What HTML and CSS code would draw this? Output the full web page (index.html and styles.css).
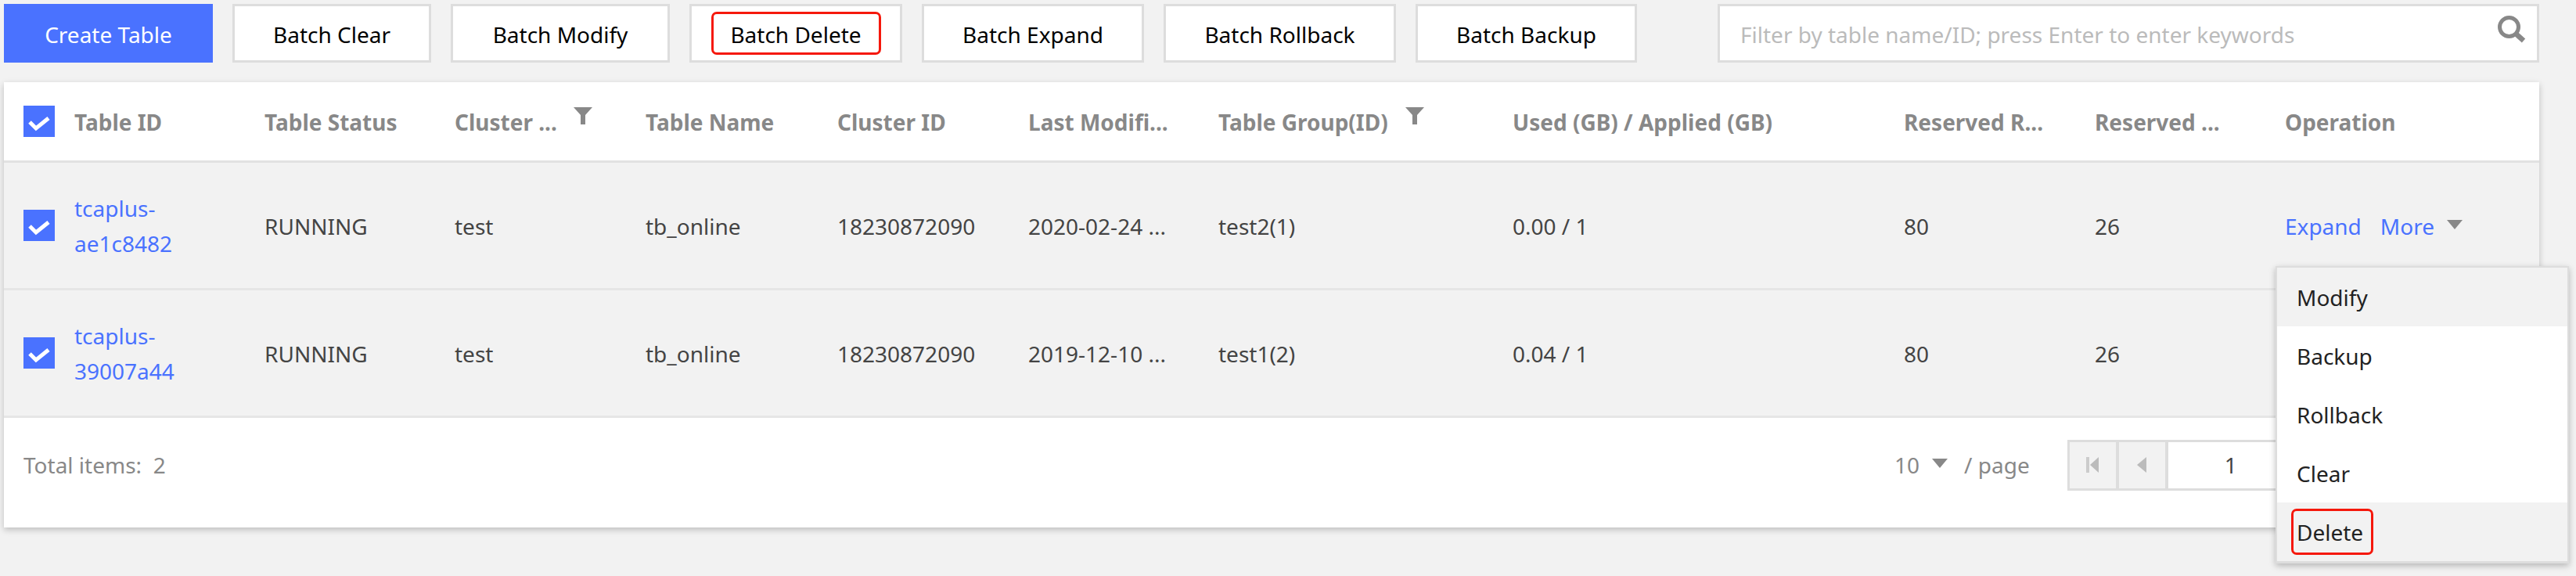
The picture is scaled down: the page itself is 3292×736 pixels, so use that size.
FILE: index.html
```html
<!DOCTYPE html>
<html lang="en">
<head>
<meta charset="utf-8">
<title>Tables</title>
<link rel="stylesheet" href="styles.css">
</head>
<body>
<svg class="defs" width="0" height="0" aria-hidden="true">
  <symbol id="check" viewBox="0 0 40 40"><path d="M8 21l8 8 16-13" fill="none" stroke="#fff" stroke-width="5"/></symbol>
  <symbol id="filter" viewBox="0 0 24 22"><path d="M0 0h24l-9 10v12h-6v-12z" fill="#888"/></symbol>
</svg>
<div class="toolbar">
  <button class="btn primary w-create">Create Table</button>
  <button class="btn w-clear">Batch Clear</button>
  <button class="btn w-modify">Batch Modify</button>
  <button class="btn w-delete"><span class="mark mark-btn">Batch Delete</span></button>
  <button class="btn w-expand">Batch Expand</button>
  <button class="btn w-rollback">Batch Rollback</button>
  <button class="btn w-backup">Batch Backup</button>
  <div class="search">
    <span class="placeholder">Filter by table name/ID; press Enter to enter keywords</span>
    <svg class="search-icon" width="36" height="36" viewBox="0 0 36 36"><circle cx="14.500" cy="14.500" r="12" fill="none" stroke="#888" stroke-width="5"/><path d="M23 23l10 9" stroke="#888" stroke-width="6.500" fill="none"/></svg>
  </div>
</div>
<div class="card">
  <div class="row head">
    <div class="cell id-cell"><span class="box"><svg width="40" height="40"><use href="#check"/></svg></span><span>Table ID</span></div>
    <div class="cell">Table Status</div>
    <div class="cell">Cluster ...<svg class="filter filter-cluster" width="24" height="22"><use href="#filter"/></svg></div>
    <div class="cell">Table Name</div>
    <div class="cell">Cluster ID</div>
    <div class="cell">Last Modifi...</div>
    <div class="cell">Table Group(ID)<svg class="filter filter-group" width="24" height="22"><use href="#filter"/></svg></div>
    <div class="cell">Used (GB) / Applied (GB)</div>
    <div class="cell">Reserved R...</div>
    <div class="cell">Reserved ...</div>
    <div class="cell">Operation</div>
  </div>
  <div class="row body">
    <div class="cell id-cell"><span class="box"><svg width="40" height="40"><use href="#check"/></svg></span><a class="link idlink">tcaplus-<br>ae1c8482</a></div>
    <div class="cell">RUNNING</div>
    <div class="cell">test</div>
    <div class="cell">tb_online</div>
    <div class="cell">18230872090</div>
    <div class="cell">2020-02-24 ...</div>
    <div class="cell">test2(1)</div>
    <div class="cell">0.00 / 1</div>
    <div class="cell">80</div>
    <div class="cell">26</div>
    <div class="cell ops"><a class="link">Expand</a><a class="link more">More</a><i class="caret"></i></div>
  </div>
  <div class="row body">
    <div class="cell id-cell"><span class="box"><svg width="40" height="40"><use href="#check"/></svg></span><a class="link idlink">tcaplus-<br>39007a44</a></div>
    <div class="cell">RUNNING</div>
    <div class="cell">test</div>
    <div class="cell">tb_online</div>
    <div class="cell">18230872090</div>
    <div class="cell">2019-12-10 ...</div>
    <div class="cell">test1(2)</div>
    <div class="cell">0.04 / 1</div>
    <div class="cell">80</div>
    <div class="cell">26</div>
    <div class="cell ops"></div>
  </div>
  <div class="foot">
    <span class="total">Total items:&nbsp; 2</span>
    <div class="pager">
      <span class="size">10</span><i class="caret size-caret"></i><span class="per">/ page</span>
      <div class="pages">
        <span class="pg"><svg width="17" height="20" viewBox="0 0 17 20"><path d="M0 0h4v20h-4z" fill="#ccc"/><path d="M16 0v20l-11-10z" fill="#bbb"/></svg></span>
        <span class="pg"><svg width="13" height="20" viewBox="0 0 13 20"><path d="M12 0v20l-12-10z" fill="#bbb"/></svg></span>
        <span class="pnum">1</span>
      </div>
    </div>
  </div>
</div>
<ul class="menu">
  <li class="on">Modify</li>
  <li>Backup</li>
  <li>Rollback</li>
  <li>Clear</li>
  <li class="on"><span class="mark mark-menu">Delete</span></li>
</ul>
</body>
</html>
```
FILE: styles.css
```css
* { box-sizing: border-box; }
html, body { margin: 0; padding: 0; }
body {
  width: 3292px;
  height: 736px;
  overflow: hidden;
  background: #f2f2f2;
  font-family: "Noto Sans", "Open Sans", sans-serif;
  font-size: 28px;
  color: #444;
  padding: 5px 0 0 5px;
  position: relative;
}
.defs { position: absolute; }
.toolbar { display: flex; gap: 25px; height: 75px; width: 3240px; }
.btn {
  font: inherit;
  color: #000;
  background: #fff;
  border: 3px solid #ddd;
  height: 75px;
  padding: 2px 0 0;
  display: flex;
  align-items: center;
  justify-content: center;
}
.btn.primary { background: #4a72ff; border-color: #4a72ff; color: #fff; }
.w-create { width: 267px; }
.w-clear { width: 254px; }
.w-modify { width: 280px; }
.w-delete { width: 272px; padding-top: 0; }
.w-expand { width: 284px; }
.w-rollback { width: 297px; }
.w-backup { width: 283px; }
.mark { border: 3px solid #f5180c; border-radius: 7px; display: flex; align-items: center; }
.mark-btn { width: 217px; height: 55px; justify-content: center; padding-top: 2px; }
.mark-menu { width: 105px; height: 59px; padding-left: 4px; margin-left: -7px; }
.search {
  margin-left: 78px;
  flex: 1;
  background: #fff;
  border: 3px solid #ddd;
  display: flex;
  align-items: center;
  justify-content: space-between;
  padding: 0 14px 8px 26px;
}
.placeholder { color: #bbb; padding-top: 10px; }
.search-icon { margin-top: -2px; }
.card {
  margin-top: 25px;
  width: 3240px;
  background: #fff;
  box-shadow: 0 3px 8px rgba(0,0,0,.22);
}
.row {
  display: grid;
  grid-template-columns: 308px 243px 244px 245px 244px 243px 376px 500px 244px 243px 350px;
}
.head { height: 103px; border-bottom: 3px solid #e2e2e2; font-weight: 700; color: #888; }
.body { height: 163px; border-bottom: 3px solid #e6e6e6; background: #f2f2f2; }
.cell { padding: 2px 0 0 25px; display: flex; align-items: center; white-space: nowrap; }
.id-cell { gap: 25px; padding-top: 0; }
.id-cell > span:last-child, .idlink { padding-top: 2px; }
.box { width: 40px; height: 40px; background: #4a72ff; display: block; flex: none; }
.box svg { display: block; }
.filter { margin-top: -16px; }
.filter-cluster { margin-left: 21px; }
.filter-group { margin-left: 22px; }
.link { color: #4a72ff; }
.idlink { line-height: 45px; }
.more { margin-left: 24px; }
.caret {
  width: 0; height: 0;
  border-left: 10px solid transparent;
  border-right: 10px solid transparent;
  border-top: 12px solid #888;
  margin: -4px 0 0 16px;
}
.foot {
  height: 140px;
  display: flex;
  align-items: center;
  justify-content: space-between;
  padding: 0 0 20px 25px;
  color: #888;
}
.pager { display: flex; align-items: center; width: 824px; }
.size-caret { margin: -4px 0 0 16px; }
.per { margin-left: 21px; }
.pages {
  margin-left: 48px;
  display: flex;
  height: 65px;
  border: 3px solid #ddd;
  flex: 1;
}
.pg {
  width: 63px;
  background: #f2f2f2;
  border-right: 4px solid #ddd;
  display: flex;
  align-items: center;
  justify-content: center;
}
.pnum { width: 160px; text-align: center; color: #444; line-height: 59px; }
.menu {
  position: absolute;
  left: 2908px;
  top: 340px;
  width: 375px;
  margin: 0;
  padding: 0;
  list-style: none;
  background: #fff;
  border: 2px solid #ddd;
  border-bottom-width: 3px;
  box-shadow: 0 3px 8px rgba(0,0,0,.25);
  color: #222;
}
.menu li { height: 75px; padding-left: 25px; display: flex; align-items: center; }
.menu li.on { background: #f2f2f2; }
```
